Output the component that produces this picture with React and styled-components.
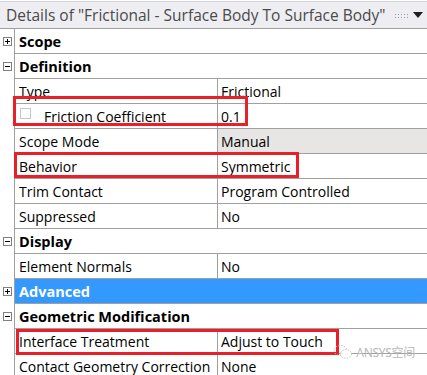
import styled, { createGlobalStyle } from "styled-components";

const Global = createGlobalStyle`
  html, body {
    margin: 0;
    padding: 0;
    background: #ffffff;
  }
  body {
    font-family: "Open Sans", "Noto Sans", "Noto Sans CJK SC", sans-serif;
  }
`;

const Panel = styled.div`
  position: relative;
  width: 427px;
  height: 375px;
  overflow: hidden;
  background: #ffffff;
`;

const TitleBar = styled.div`
  display: flex;
  align-items: center;
  height: 26px;
  padding: 0 2px 0 6px;
  border-top: 1px solid #d4d4dc;
  margin-top: 1px;
  border-bottom: 1px solid #a0a0a0;
  background: #eeeef2;
`;

const Title = styled.div`
  flex: 1;
  font-size: 15.5px;
  color: #4a4a4a;
  white-space: nowrap;
  overflow: hidden;
`;

const Grip = styled.div`
  width: 15px;
  height: 5px;
  margin: 0 4px 0 4px;
  background-image: radial-gradient(circle, #9a9aa4 0.6px, transparent 0.7px);
  background-size: 3px 3px;
`;

const Arrow = styled.div`
  width: 0;
  height: 0;
  border-left: 5px solid transparent;
  border-right: 5px solid transparent;
  border-top: 6px solid #1e1e1e;
  margin-right: 2px;
`;

const Row = styled.div`
  display: flex;
  height: 25px;
`;

const Gutter = styled.div`
  width: 15px;
  flex: none;
  display: flex;
  align-items: center;
  justify-content: center;
  border-right: 1px solid #a0a0a0;
  box-sizing: border-box;
  padding-left: 1px;
`;

const Toggle = styled.div`
  position: relative;
  width: 9px;
  height: 9px;
  box-sizing: border-box;
  border: 1px solid #808080;
  background: #fff;
  &::before {
    content: "";
    position: absolute;
    left: 1px;
    right: 1px;
    top: 3px;
    height: 1px;
    background: #000;
  }
  &::after {
    content: "";
    display: ${(p) => (p.open ? "none" : "block")};
    position: absolute;
    top: 1px;
    bottom: 1px;
    left: 3px;
    width: 1px;
    background: #000;
  }
`;

const HeaderCell = styled.div`
  flex: 1;
  display: flex;
  align-items: center;
  padding-left: 4px;
  font-size: 14.5px;
  font-weight: 700;
  color: ${(p) => (p.selected ? "#ffffff" : "#000000")};
  background: ${(p) => (p.selected ? "#3399ff" : "#ffffff")};
  border-bottom: 1px solid #a0a0a0;
  box-sizing: border-box;
`;

const NameCell = styled.div`
  width: 203px;
  flex: none;
  display: flex;
  align-items: center;
  padding-left: 4px;
  box-sizing: border-box;
  font-size: 14px;
  color: #000;
  border-right: 1px solid #a0a0a0;
  border-bottom: 1px solid #a0a0a0;
  white-space: nowrap;
`;

const ValueCell = styled.div`
  flex: 1;
  display: flex;
  align-items: center;
  padding-left: 3px;
  box-sizing: border-box;
  font-size: 14px;
  color: #000;
  background: ${(p) => (p.readonly ? "#e8e6e4" : "#ffffff")};
  border-bottom: 1px solid #a0a0a0;
  white-space: nowrap;
`;

const Check = styled.span`
  width: 11px;
  height: 11px;
  box-sizing: border-box;
  border: 1px solid #c8c8c8;
  margin: 0 13px 0 1px;
  position: relative;
  top: -3px;
`;

const Mark = styled.div`
  position: absolute;
  border: 3px solid #e8202a;
  box-sizing: border-box;
  pointer-events: none;
`;

const Watermark = styled.div`
  position: absolute;
  right: 12px;
  top: 343px;
  display: flex;
  align-items: center;
  gap: 3px;
  font-size: 12px;
  color: #b8b8b8;
  font-family: "Noto Sans", "Noto Sans CJK SC", sans-serif;
  letter-spacing: -0.3px;
`;

const sections = [
  { title: "Scope", open: false, rows: [] },
  {
    title: "Definition",
    open: true,
    rows: [
      { name: "Type", value: "Frictional" },
      { name: "Friction Coefficient", value: "0.1", check: true },
      { name: "Scope Mode", value: "Manual", readonly: true },
      { name: "Behavior", value: "Symmetric" },
      { name: "Trim Contact", value: "Program Controlled" },
      { name: "Suppressed", value: "No" },
    ],
  },
  {
    title: "Display",
    open: true,
    rows: [{ name: "Element Normals", value: "No" }],
  },
  { title: "Advanced", open: false, selected: true, rows: [] },
  {
    title: "Geometric Modification",
    open: true,
    rows: [
      { name: "Interface Treatment", value: "Adjust to Touch" },
      { name: "Contact Geometry Correction", value: "None" },
    ],
  },
];

const WeChat = () => (
  <svg width="20" height="16" viewBox="0 0 20 16" fill="none" stroke="#c4c4c4" strokeWidth="1">
    <ellipse cx="7.5" cy="6.5" rx="6.5" ry="5" strokeDasharray="1.5 1.2" />
    <ellipse cx="13" cy="10" rx="5.5" ry="4.3" fill="#fff" strokeDasharray="1.5 1.2" />
  </svg>
);

export default function App() {
  return (
    <>
      <Global />
      <Panel>
        <TitleBar>
          <Title>Details of "Frictional - Surface Body To Surface Body"</Title>
          <Grip />
          <Arrow />
        </TitleBar>
        {sections.map((s) => (
          <div key={s.title}>
            <Row>
              <Gutter>
                <Toggle open={s.open} />
              </Gutter>
              <HeaderCell selected={s.selected}>{s.title}</HeaderCell>
            </Row>
            {s.rows.map((r) => (
              <Row key={r.name}>
                <Gutter />
                <NameCell>
                  {r.check && <Check />}
                  {r.name}
                </NameCell>
                <ValueCell readonly={r.readonly}>{r.value}</ValueCell>
              </Row>
            ))}
          </div>
        ))}
        <Mark style={{ left: 13, top: 96, width: 235, height: 30 }} />
        <Mark style={{ left: 14, top: 152, width: 285, height: 26 }} />
        <Mark style={{ left: 16, top: 329, width: 323, height: 26 }} />
        <Watermark>
          <WeChat />
          ANSYS空间
        </Watermark>
      </Panel>
    </>
  );
}
